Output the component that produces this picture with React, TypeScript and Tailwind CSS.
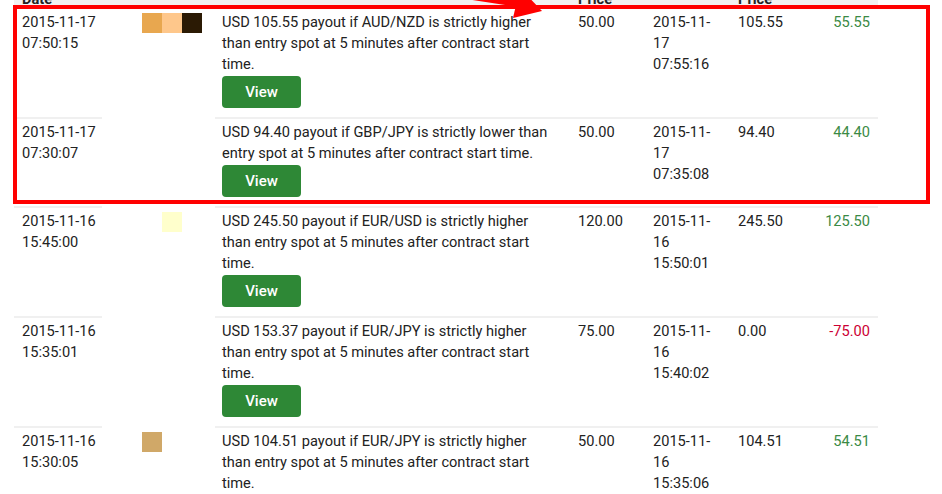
type Row = {
  date: string;
  time: string;
  swatches: (string | null)[];
  details: string;
  buyPrice: string;
  exitDate: string;
  exitTime: string;
  sellPrice: string;
  profit: string;
  loss?: boolean;
};

const rows: Row[] = [
  {
    date: "2015-11-17",
    time: "07:50:15",
    swatches: ["#e8a74f", "#fec78b", "#2b1a04"],
    details: "USD 105.55 payout if AUD/NZD is strictly higher than entry spot at 5 minutes after contract start time.",
    buyPrice: "50.00",
    exitDate: "2015-11-17",
    exitTime: "07:55:16",
    sellPrice: "105.55",
    profit: "55.55",
  },
  {
    date: "2015-11-17",
    time: "07:30:07",
    swatches: [],
    details: "USD 94.40 payout if GBP/JPY is strictly lower than entry spot at 5 minutes after contract start time.",
    buyPrice: "50.00",
    exitDate: "2015-11-17",
    exitTime: "07:35:08",
    sellPrice: "94.40",
    profit: "44.40",
  },
  {
    date: "2015-11-16",
    time: "15:45:00",
    swatches: [null, "#ffffcc"],
    details: "USD 245.50 payout if EUR/USD is strictly higher than entry spot at 5 minutes after contract start time.",
    buyPrice: "120.00",
    exitDate: "2015-11-16",
    exitTime: "15:50:01",
    sellPrice: "245.50",
    profit: "125.50",
  },
  {
    date: "2015-11-16",
    time: "15:35:01",
    swatches: [],
    details: "USD 153.37 payout if EUR/JPY is strictly higher than entry spot at 5 minutes after contract start time.",
    buyPrice: "75.00",
    exitDate: "2015-11-16",
    exitTime: "15:40:02",
    sellPrice: "0.00",
    profit: "-75.00",
    loss: true,
  },
  {
    date: "2015-11-16",
    time: "15:30:05",
    swatches: ["#d0a868"],
    details: "USD 104.51 payout if EUR/JPY is strictly higher than entry spot at 5 minutes after contract start time.",
    buyPrice: "50.00",
    exitDate: "2015-11-16",
    exitTime: "15:35:06",
    sellPrice: "104.51",
    profit: "54.51",
  },
];

const td = "align-top border-t-2 border-[#f0f0f0] pl-2 pr-2 pt-[3px] pb-[9px]";

export default function App() {
  return (
    <div className="relative min-h-[494px] overflow-hidden bg-white text-[14.6px] leading-[21px] text-[#222]" style={{ fontFamily: "Roboto, 'Liberation Sans', sans-serif" }}>
      <div className="pl-[14px] -mt-[33px]">
        <table className="table-fixed border-collapse w-[864px]">
          <colgroup>
            <col className="w-[88px]" />
            <col className="w-[113px]" />
            <col className="w-[355px]" />
            <col className="w-[75px]" />
            <col className="w-[85px]" />
            <col className="w-[74px]" />
            <col className="w-[74px]" />
          </colgroup>
          <thead>
            <tr className="bg-[#f2f2f2] font-bold text-left leading-[16px]">
              <th className="align-bottom px-2 pt-2 pb-0">Purchase Date</th>
              <th className="px-2" />
              <th className="align-middle px-2">Contract Details</th>
              <th className="align-bottom px-2 pt-2 pb-0">Purchase Price</th>
              <th className="align-middle px-2 whitespace-nowrap">Sell Date</th>
              <th className="align-bottom px-2 pt-2 pb-0">Sell Price</th>
              <th className="align-middle px-2 text-right whitespace-nowrap">P/L</th>
            </tr>
          </thead>
          <tbody>
            {rows.map((r, i) => (
              <tr key={i}>
                <td className={`${td} whitespace-nowrap`}>
                  <div>{r.date}</div>
                  <div>{r.time}</div>
                </td>
                <td className="align-top pl-[40px] pt-[5px]">
                  <div className="flex">
                    {r.swatches.map((c, j) => (
                      <div key={j} className="w-5 h-5" style={{ backgroundColor: c ?? "transparent" }} />
                    ))}
                  </div>
                </td>
                <td className="align-top border-t-2 border-[#f0f0f0] pl-[7px] pr-[17px] pt-[3px] pb-[9px]">
                  <p>{r.details}</p>
                  <button className="mt-[1px] w-[79px] h-[32px] rounded-[4px] bg-[#2e8836] text-white font-medium text-[15px]">
                    View
                  </button>
                </td>
                <td className={td}>{r.buyPrice}</td>
                <td className={td}>
                  {r.exitDate} {r.exitTime}
                </td>
                <td className={td}>{r.sellPrice}</td>
                <td className={`${td} text-right ${r.loss ? "text-[#cc0033]" : "text-[#3b8a45]"}`}>{r.profit}</td>
              </tr>
            ))}
          </tbody>
        </table>
      </div>

      {/* highlight annotation */}
      <div className="absolute left-[13px] top-[5px] w-[917px] h-[199px] border-4 border-[#ff0000] pointer-events-none" />
      <svg className="absolute left-0 top-0 pointer-events-none" width="942" height="40" viewBox="0 0 942 40">
        <line x1="430" y1="-10" x2="522" y2="4" stroke="#ff0000" strokeWidth="7" />
        <polygon points="542,11 513,18 520,-12" fill="#ff0000" />
      </svg>
    </div>
  );
}
